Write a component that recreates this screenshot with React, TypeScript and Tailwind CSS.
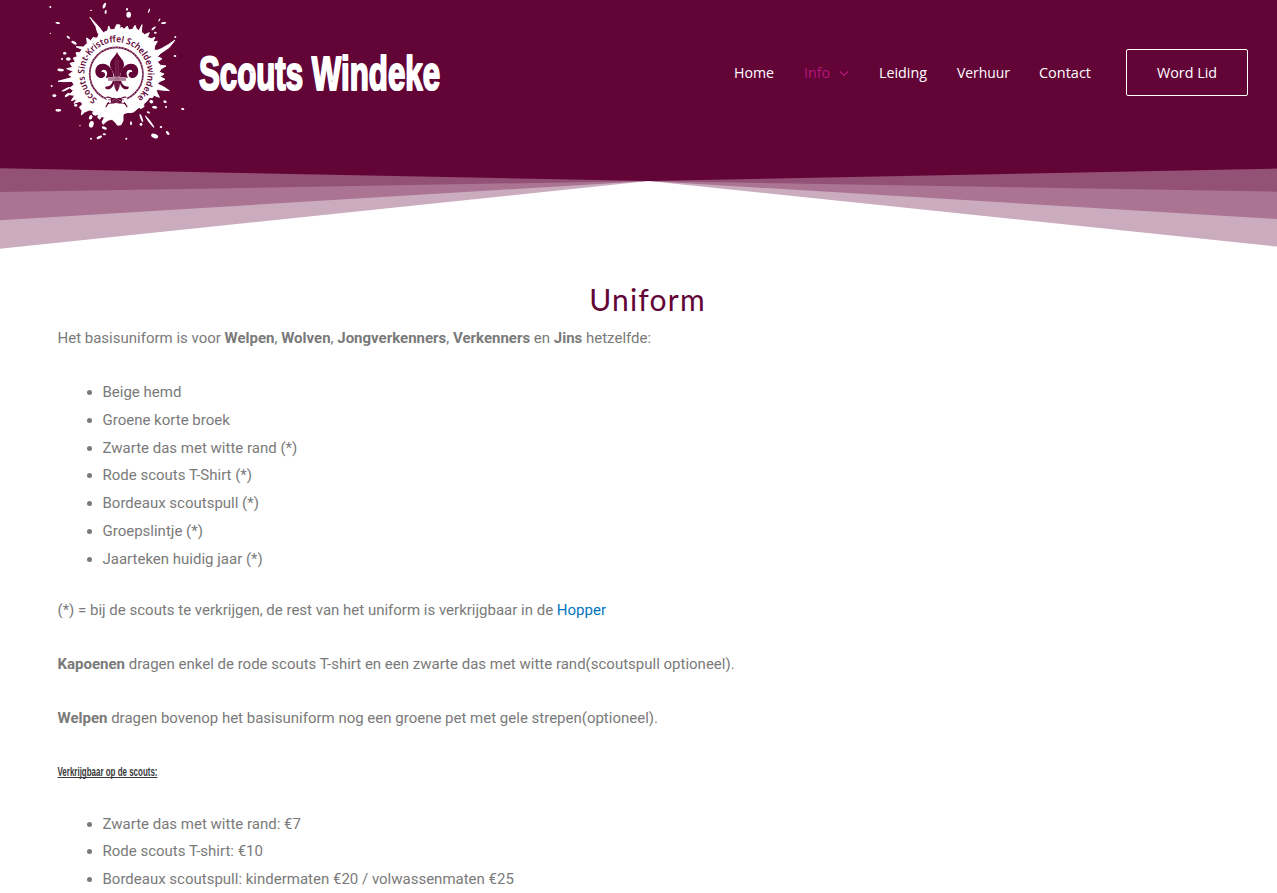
import React from "react";

const ITEMS = [
  "Beige hemd",
  "Groene korte broek",
  "Zwarte das met witte rand (*)",
  "Rode scouts T-Shirt (*)",
  "Bordeaux scoutspull (*)",
  "Groepslintje (*)",
  "Jaarteken huidig jaar (*)",
];

const PRICES = [
  "Zwarte das met witte rand: €7",
  "Rode scouts T-shirt: €10",
  "Bordeaux scoutspull: kindermaten €20 / volwassenmaten €25",
];

// Paint drops around the emblem: cx, cy, rx, ry, rotation
const DROPS: number[][] = [
  [31, 21, 3, 3, 0], [53, 69, 7, 3, 10], [31, 100, 2, 2, 0], [153, 31, 3, 2, 0],
  [193, 17, 4, 9, 25], [197, 36, 3, 6, 10], [266, 44, 7, 9, 0], [261, 28, 3, 4, 0],
  [327, 32, 2, 7, 20], [358, 60, 2, 5, 30], [371, 69, 8, 3, -8], [341, 85, 8, 3, -40],
  [346, 98, 4, 3, 0], [406, 111, 3, 3, 0], [405, 168, 4, 3, 0],
  [85, 112, 6, 3, 40], [102, 128, 9, 4, 30], [74, 160, 5, 4, 0], [66, 177, 3, 3, 0],
  [85, 177, 7, 5, 0], [62, 210, 10, 4, 5], [35, 258, 3, 3, 0], [43, 287, 6, 4, 0],
  [55, 331, 9, 4, 0], [78, 268, 14, 3, -25], [82, 285, 9, 4, -35], [107, 316, 5, 4, 0],
  [120, 377, 2, 2, 0], [154, 373, 7, 10, 15], [152, 352, 5, 7, 25],
  [193, 384, 8, 4, 20], [178, 412, 9, 4, -25], [153, 416, 3, 3, 0], [193, 403, 5, 3, 0],
  [259, 416, 3, 3, 0], [273, 370, 3, 6, 0], [304, 354, 3, 13, -20], [303, 373, 4, 5, 0],
  [329, 365, 3, 23, -37], [325, 337, 5, 3, 20], [344, 322, 8, 4, 5], [334, 305, 6, 5, 20],
  [344, 408, 11, 6, 20], [363, 381, 4, 3, 0], [383, 399, 4, 7, -40], [375, 305, 5, 4, 20],
  [378, 321, 3, 3, 0], [428, 327, 5, 3, 15],
];

function Emblem() {
  return (
    <svg className="h-[145px] w-[150px] shrink-0" viewBox="0 0 450 435" aria-hidden="true">
      <g fill="#fff">
        <path
          stroke="#fff"
          strokeWidth="3"
          strokeLinejoin="round"
          d="M150 52L163 66 176 80 190 98 203 92 206 78 212 90 224 88 230 74 240 75 239 86 246 82 252 88 262 78 266 90 278 88 285 76 290 88 297 92 306 74 304 96 314 104 328 98 322 112 334 116 345 112 338 126 352 124 344 138 342 150 352 151 364 146 385 134 405 120 388 142 362 160 352 170 366 176 352 186 362 196 378 198 364 206 357 216 372 222 360 230 375 238 360 244 352 252 370 260 388 272 364 270 348 268 352 280 358 292 342 286 336 294 326 290 322 302 310 306 312 320 302 326 296 320 288 330 280 336 270 338 258 336 249 345 249 362 243 374 233 376 225 366 216 358 206 360 196 366 190 373 186 366 194 352 184 350 179 358 173 352 177 342 166 346 158 342 160 332 148 330 134 336 124 345 126 332 118 322 128 312 120 304 102 310 112 296 94 302 104 286 88 284 100 272 90 264 102 254 96 244 74 245 54 244 76 238 98 232 86 224 100 214 80 206 98 202 90 190 106 186 100 174 112 170 108 158 120 158 126 148 108 140 130 141 142 130 140 114 152 122 160 112 172 116 176 104 171 92 168 80z"
        />
        <circle cx="230" cy="220" r="124" />
        {DROPS.map(([x, y, rx, ry, a], i) => (
          <ellipse key={i} cx={x} cy={y} rx={rx} ry={ry} transform={`rotate(${a} ${x} ${y})`} />
        ))}
      </g>
      <path id="emblem-arc" d="M172 298 A95 95 0 1 1 292 292" fill="none" />
      <text fill="#630437" fontFamily="'Noto Sans', sans-serif" fontSize="27" fontWeight="600">
        <textPath href="#emblem-arc" textLength="468" lengthAdjust="spacingAndGlyphs">
          Scouts Sint-Kristoffel Scheldewindeke
        </textPath>
      </text>
      <circle cx="229" cy="222" r="80" fill="none" stroke="#630437" strokeWidth="5" />
      <circle cx="229" cy="222" r="80" fill="none" stroke="#fff" strokeWidth="1.5" strokeDasharray="5 4" />
      <path d="M197 286h66l-8 42h-50z" fill="#fff" />
      <g fill="none" stroke="#630437" strokeWidth="3.5" strokeLinecap="round">
        <path d="M200 292c15-6 22 16 37 15 10-1 9-12 0-12-12 0-20 19-35 16M258 292c-15-6-22 16-37 15-10-1-9-12 0-12 12 0 20 19 35 16M206 308l-8 12M253 308l8 12" />
        <path d="M206 299c13-2 22 14 38 11M251 299c-13-2-22 14-38 11" strokeWidth="2" />
      </g>
      <g fill="#630437">
        <path d="M231 155c4 14 21 22 21 39 0 13-12 21-13 36h-16c-1-15-13-23-13-36 0-17 17-25 21-39z" />
        <path d="M221 233c-1-25-15-42-33-42-27 0-29 39-6 43 10 1 16-7 12-15-3-4-7-4-10-2 0-10 14-10 17 0 2 7-2 12-4 16zM240 233c1-25 15-42 33-42 27 0 29 39 6 43-10 1-16-7-12-15 3-4 7-4 10-2 0-10-14-10-17 0-2 7 2 12 4 16z" />
        <path d="M223 241h16c2 13 0 24-8 35-8-11-10-22-8-35zM219 240c-2 13-10 20-23 20-2 8 8 10 15 6 8-4 12-14 13-26zM243 240c2 13 10 20 23 20 2 8-8 10-15 6-8-4-12-14-13-26z" />
      </g>
      <path d="M204 231h54v12h-54z" fill="#bd93aa" />
      <path d="M204 237h54M226 180v85M231 170v100M236 180v85" stroke="#8b4a6d" strokeWidth="1.5" />
    </svg>
  );
}

function SiteTitle() {
  return (
    <svg className="h-[60px] w-[260px] shrink-0 overflow-visible" viewBox="0 0 260 60">
      <text
        x="9"
        y="46.5"
        fill="#fff"
        stroke="#fff"
        strokeWidth="2.2"
        strokeLinejoin="round"
        fontFamily="'Liberation Sans Narrow', 'Liberation Sans', sans-serif"
        fontWeight="700"
        fontSize="48"
        textLength="241"
        lengthAdjust="spacingAndGlyphs"
      >
        Scouts Windeke
      </text>
      <g fill="#8f4d72">
        <circle cx="29" cy="23" r=".7" /><circle cx="62" cy="29" r=".6" />
        <circle cx="78" cy="24" r=".7" /><circle cx="132" cy="20" r=".7" />
        <circle cx="142" cy="38" r=".6" /><circle cx="190" cy="31" r=".7" />
        <circle cx="222" cy="25" r=".6" /><circle cx="105" cy="42" r=".6" />
      </g>
    </svg>
  );
}

function NavText({ text, width }: { text: string; width: number }) {
  return (
    <svg className="block h-6 overflow-visible" width={width} viewBox={`0 0 ${width} 24`}>
      <text
        x="0"
        y="17"
        fill="currentColor"
        fontFamily="'Open Sans', 'Noto Sans', sans-serif"
        fontSize="15"
        textLength={width}
        lengthAdjust="spacingAndGlyphs"
      >
        {text}
      </text>
    </svg>
  );
}

function Header() {
  return (
    <header className="flex h-[168px] items-start bg-[#630437] pl-10 text-white">
      <Emblem />
      <div className="pt-[43px]">
        <SiteTitle />
      </div>
      <nav className="ml-auto flex h-[145px] items-center pr-[29px]">
        <a className="mr-[30px]"><NavText text="Home" width={40} /></a>
        <a className="mr-[30px] flex items-center text-[#b5177a]">
          <NavText text="Info" width={26} />
          <svg className="ml-[9px] h-[10px] w-[10px]" viewBox="0 0 10 10" fill="none" stroke="currentColor" strokeWidth="1.2">
            <path d="M1 3.5l4 4 4-4" />
          </svg>
        </a>
        <a className="mr-[30px]"><NavText text="Leiding" width={48} /></a>
        <a className="mr-[29px]"><NavText text="Verhuur" width={53} /></a>
        <a className="mr-[35px]"><NavText text="Contact" width={52} /></a>
        <a className="flex h-[47px] w-[122px] items-center justify-center rounded-[2px] border border-white">
          <NavText text="Word Lid" width={60} />
        </a>
      </nav>
    </header>
  );
}

function Fan() {
  return (
    <svg className="block h-[82px] w-full" viewBox="0 168 1277 82" preserveAspectRatio="none">
      <path fill="#cbacbf" d="M0 168H1297V248.7L648.5 181L0 248.7z" />
      <path fill="#aa7492" d="M0 168H1297V220.2L648.5 181L0 220.2z" />
      <path fill="#935176" d="M0 168H1297V192L648.5 181L0 192z" />
      <path fill="#630437" d="M0 168H1297V168.2L648.5 181L0 168.2z" />
    </svg>
  );
}

export default function App() {
  return (
    <div className="h-[893px] w-full overflow-hidden bg-white font-['Roboto',sans-serif] text-[15px] leading-[27.75px] text-[#7a7a7a]">
      <Header />
      <Fan />
      <main className="px-[57.5px] pt-[31px]">
        <h1 className="pl-[18px] text-center font-['Lato',sans-serif] text-[30px] leading-[36px] tracking-[1.2px] text-[#630437]">
          Uniform
        </h1>
        <p className="mt-[8px]">
          Het basisuniform is voor <b>Welpen</b>, <b>Wolven</b>, <b>Jongverkenners</b>, <b>Verkenners</b> en{" "}
          <b>Jins</b> hetzelfde:
        </p>
        <ul className="mt-[26.25px] list-disc pl-[45px]">
          {ITEMS.map((item) => (
            <li key={item}>{item}</li>
          ))}
        </ul>
        <p className="mt-[23.5px]">
          (*) = bij de scouts te verkrijgen, de rest van het uniform is verkrijgbaar in de{" "}
          <a className="text-[#0274be]">Hopper</a>
        </p>
        <p className="mt-[26.25px]">
          <b>Kapoenen</b> dragen enkel de rode scouts T-shirt en een zwarte das met witte rand(scoutspull optioneel).
        </p>
        <p className="mt-[26.25px]">
          <b>Welpen</b> dragen bovenop het basisuniform nog een groene pet met gele strepen(optioneel).
        </p>
        <h2 className="mt-[26.25px] h-[27.75px] text-[#3a3a3a]">
          <svg className="block h-7 w-[110px] overflow-visible" viewBox="0 0 110 28">
            <text
              x="-0.5"
              y="17"
              fill="currentColor"
              fontFamily="'Liberation Sans Narrow', 'Liberation Sans', sans-serif"
              fontWeight="700"
              fontSize="12"
              textLength="100"
              lengthAdjust="spacingAndGlyphs"
            >
              Verkrijgbaar op de scouts:
            </text>
            <path d="M-0.5 18.5h100" stroke="currentColor" />
          </svg>
        </h2>
        <ul className="mt-[24px] list-disc pl-[45px]">
          {PRICES.map((item) => (
            <li key={item}>{item}</li>
          ))}
        </ul>
      </main>
    </div>
  );
}
